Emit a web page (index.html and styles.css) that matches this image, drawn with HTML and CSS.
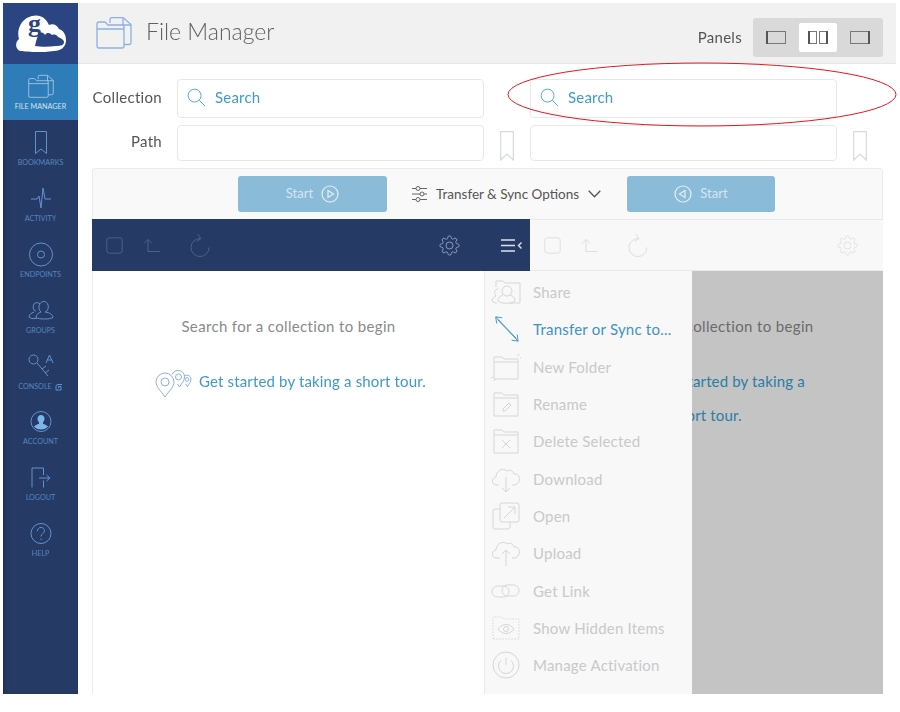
FILE: index.html
```html
<!DOCTYPE html>
<html lang="en">
<head>
<meta charset="utf-8">
<title>File Manager</title>
<link rel="stylesheet" href="styles.css">
</head>
<body>
<svg class="sprite" aria-hidden="true">
  <symbol id="i-search" viewBox="0 0 20 20"><circle cx="8" cy="8" r="6.8"/><path d="M13 13l6 6"/></symbol>
  <symbol id="i-mark" viewBox="0 0 14 30"><path d="M.7.7h12.600v28.300L7 23 .7 29z"/></symbol>
  <symbol id="i-check" viewBox="0 0 17 17"><rect x=".8" y=".8" width="15.400" height="15.400" rx="2.500"/></symbol>
  <symbol id="i-up" viewBox="0 0 17 15"><path d="M5 14V1.500M1 5.500l4-4 4 4M5 13.500h12"/></symbol>
  <symbol id="i-redo" viewBox="0 0 21 24"><path d="M11 5.500a9 9 0 1 0 9 9"/><path d="M8.500 1l3.500 4.500-4.500 3"/></symbol>
  <symbol id="i-gear" viewBox="0 0 24 24"><circle cx="12" cy="12" r="4"/><path d="M19.400 15a1.650 1.650 0 0 0 .33 1.820l.06.06a2 2 0 0 1 0 2.830 2 2 0 0 1-2.830 0l-.06-.06a1.650 1.650 0 0 0-1.820-.33 1.650 1.650 0 0 0-1 1.510V21a2 2 0 0 1-2 2 2 2 0 0 1-2-2v-.09A1.650 1.650 0 0 0 9 19.400a1.650 1.650 0 0 0-1.820.33l-.06.06a2 2 0 0 1-2.830 0 2 2 0 0 1 0-2.830l.06-.06a1.650 1.650 0 0 0 .33-1.820 1.650 1.650 0 0 0-1.510-1H3a2 2 0 0 1-2-2 2 2 0 0 1 2-2h.09A1.650 1.650 0 0 0 4.600 9a1.650 1.650 0 0 0-.33-1.820l-.06-.06a2 2 0 0 1 0-2.830 2 2 0 0 1 2.830 0l.06.06a1.650 1.650 0 0 0 1.820.33H9a1.650 1.650 0 0 0 1-1.510V3a2 2 0 0 1 2-2 2 2 0 0 1 2 2v.09a1.650 1.650 0 0 0 1 1.510 1.650 1.650 0 0 0 1.820-.33l.06-.06a2 2 0 0 1 2.830 0 2 2 0 0 1 0 2.830l-.06.06a1.650 1.650 0 0 0-.33 1.820V9a1.650 1.650 0 0 0 1.510 1H21a2 2 0 0 1 2 2 2 2 0 0 1-2 2h-.09a1.650 1.650 0 0 0-1.510 1z"/></symbol>
  <symbol id="i-folders" viewBox="0 0 36 32"><path d="M14 6V2.500a2 2 0 0 1 2-2h11l8 7v18a2 2 0 0 1-2 2h-5"/><path d="M27 1v7h8"/><path d="M1 28.500V7a2 2 0 0 1 2-2h6l3 3h14a2 2 0 0 1 2 2v19a2 2 0 0 1-2 2H3a2 2 0 0 1-2-2.500zM1 12h27"/></symbol>
  <symbol id="i-pins" viewBox="0 0 37 29"><path d="M10 28C6 22 1 18 1 13a9 9 0 0 1 18 0c0 5-5 9-9 15z"/><circle cx="10" cy="13" r="4"/><path d="M17 5.500a6.500 6.500 0 0 1 12.500 2.500c0 4-3 6-5 10l-2-3"/><circle cx="23.500" cy="8" r="3"/><path d="M29.500 7a4 4 0 0 1 6.500 3c0 3-2 4.500-3.500 7.500L30.500 15"/><circle cx="32" cy="10.500" r="1.800"/></symbol>
</svg>

<div class="app">
  <nav class="side">
    <div class="logo">
      <svg class="logo-cloud" viewBox="0 0 50 37" aria-hidden="true">
        <path class="cloud-white" d="M4 36C-1 34-1 27 3 24 0 14 6 3 16 1c8-2 14 2 17 9 4-2 8 0 10 4 5 2 7 6 7 11 0 7-5 11-12 11-6 1-12 1-18 1-8 0-15-1-16-1z"/>
        <path class="cloud-dark" d="M19 31c1-4 2-10 5-13 2-1 4 0 5 2 2-3 5-2 7 0 3-1 5 0 6 2 3 1 6 3 6 5 0 3-3 4-8 4-7 1-15 1-21 0z"/>
      </svg>
      <span class="logo-g">g</span>
    </div>
    <a class="nav-item active">
      <svg class="nav-icon"><use href="#i-folders"/></svg>
      <span>File Manager</span>
    </a>
    <a class="nav-item">
      <svg class="nav-icon" viewBox="-7 -2 26 27"><path d="M.5.500h11v22L6 18 .5 22.500z"/></svg>
      <span>Bookmarks</span>
    </a>
    <a class="nav-item">
      <svg class="nav-icon" viewBox="-3 -3 26 27"><path d="M0 11h6l2-3 2 12 2-20 2 11h6"/></svg>
      <span>Activity</span>
    </a>
    <a class="nav-item">
      <svg class="nav-icon" viewBox="0 0 26 27"><circle cx="13" cy="13.500" r="11.500"/><circle cx="13" cy="13.500" r="3.500"/></svg>
      <span>Endpoints</span>
    </a>
    <a class="nav-item">
      <svg class="nav-icon" viewBox="0 -3 26 27"><path d="M8 11C5 11 4 5 7 3c2-1 4 0 5 1M6 12c-3 1-5 3-5 5 2 2 6 2 8 1"/><path d="M17 12c4-1 5-9-.5-10.500C11 1 9 9 13 12c-3 1-5 3-5 5.500 3 2 14 2 17 0 0-2.500-3-5-8-5.500z"/></svg>
      <span>Groups</span>
    </a>
    <a class="nav-item">
      <svg class="nav-icon" viewBox="0 0 26 27"><circle cx="5.500" cy="6.500" r="4.500"/><path d="M9 10l11 13M14 16l4-3M17 20l4-3"/><path d="M18 10l3.500-8 3.500 8M19.500 7h4"/></svg>
      <span>Console <svg class="ext" viewBox="0 0 8 8"><path d="M7 1.500H3a2 2 0 0 0-2 2V7h5V3.500H3.500V5"/></svg></span>
    </a>
    <a class="nav-item">
      <svg class="nav-icon" viewBox="-2 -2.500 26 27"><circle cx="11" cy="11" r="10"/><path class="fill" d="M11 4.500c2 0 3.500 1.600 3.500 3.800 0 1.500-.7 2.700-1.500 3.400v1.500c1.800.8 4 1.600 5 3a10 10 0 0 1-14 0c1-1.400 3.200-2.200 5-3v-1.500c-.8-.7-1.500-1.900-1.500-3.400 0-2.200 1.500-3.800 3.500-3.800z"/></svg>
      <span>Account</span>
    </a>
    <a class="nav-item">
      <svg class="nav-icon" viewBox="-3 -3.500 26 27"><path d="M1 20V.500h11.500v7M12.500 13v7M8 10.500h11M15.500 7.500l3.500 3-3.500 3"/></svg>
      <span>Logout</span>
    </a>
    <a class="nav-item">
      <svg class="nav-icon" viewBox="-2 -2.500 26 27"><circle cx="11" cy="11" r="10"/><path d="M7.500 8.500C7.500 6 9 5 11 5s3.500 1.300 3.500 3.200c0 2.800-3.500 2.800-3.500 5.800"/><path d="M11 16v1.500"/></svg>
      <span>Help</span>
    </a>
  </nav>

  <main class="main">
    <header class="top">
      <svg class="top-icon"><use href="#i-folders"/></svg>
      <h1 class="title">File Manager</h1>
      <span class="panels-label">Panels</span>
      <div class="seg">
        <div class="seg-btn"><svg class="seg-icon" viewBox="0 0 20 13"><rect x=".5" y=".5" width="19" height="12"/><path class="seg-bar" d="M1 0v13"/></svg></div>
        <div class="seg-btn on"><svg class="seg-icon" viewBox="0 0 20 13"><rect x=".5" y=".5" width="8" height="12"/><rect x="11.500" y=".5" width="8" height="12"/><path class="seg-bar" d="M1 0v13M19 0v13"/></svg></div>
        <div class="seg-btn"><svg class="seg-icon" viewBox="0 0 20 13"><rect x=".5" y=".5" width="19" height="12"/><path class="seg-bar" d="M19 0v13"/></svg></div>
      </div>
    </header>

    <section class="form">
      <label class="field-label">Collection</label>
      <div class="input tall"><svg class="search-icon"><use href="#i-search"/></svg><span>Search</span></div>
      <span></span>
      <div class="input tall"><svg class="search-icon"><use href="#i-search"/></svg><span>Search</span></div>
      <span></span>
      <label class="field-label">Path</label>
      <div class="input"></div>
      <svg class="mark"><use href="#i-mark"/></svg>
      <div class="input"></div>
      <svg class="mark"><use href="#i-mark"/></svg>
    </section>

    <section class="browser">
      <div class="actions">
        <button class="start"><span>Start</span><svg class="play" viewBox="0 0 18 18"><circle cx="9" cy="9" r="8"/><path d="M7 5.500l5.500 3.500L7 12.500z"/></svg></button>
        <div class="options">
          <svg class="sliders" viewBox="0 0 15 16"><path d="M0 2.500h4M8 2.500h7M0 8h8M12 8h3M0 13.500h4M8 13.500h7"/><circle cx="6" cy="2.500" r="2"/><circle cx="10" cy="8" r="2"/><circle cx="6" cy="13.500" r="2"/></svg>
          <span>Transfer &amp; Sync Options</span>
          <svg class="chev" viewBox="0 0 13 8"><path d="M.7.7l5.800 6 5.800-6"/></svg>
        </div>
        <button class="start back"><svg class="play" viewBox="0 0 18 18"><circle cx="9" cy="9" r="8"/><path d="M11 5.500L5.500 9l5.500 3.500z"/></svg><span>Start</span></button>
      </div>

      <div class="panes">
        <div class="pane">
          <div class="bar dark">
            <svg class="b-check"><use href="#i-check"/></svg>
            <svg class="b-up"><use href="#i-up"/></svg>
            <svg class="b-redo"><use href="#i-redo"/></svg>
            <svg class="b-gear"><use href="#i-gear"/></svg>
            <svg class="b-menu" viewBox="0 0 21 13"><path d="M0 1h14M0 6.500h14M0 12h14M20.500 3.500l-3 3 3 3"/></svg>
          </div>
          <div class="empty open">
            <p class="hint">Search for a collection to begin</p>
            <a class="tour"><svg class="pins"><use href="#i-pins"/></svg>Get started by taking a short tour.</a>
          </div>
        </div>
        <div class="pane">
          <div class="bar light">
            <svg class="b-check"><use href="#i-check"/></svg>
            <svg class="b-up"><use href="#i-up"/></svg>
            <svg class="b-redo"><use href="#i-redo"/></svg>
            <svg class="b-gear"><use href="#i-gear"/></svg>
          </div>
          <div class="empty dim">
            <p class="hint">Search for a collection to begin</p>
            <a class="tour"><svg class="pins"><use href="#i-pins"/></svg>Get started by taking a short tour.</a>
          </div>
        </div>

        <ul class="menu">
          <li><svg viewBox="0 0 30 28"><path d="M5 9V3h7l2 2h15v20H19"/><circle cx="16" cy="13" r="5"/><path d="M12 17c-3 1-5 3-5 6 3 3 14 3 17 0 0-3-2-5-5-6"/><path d="M7 11c-3 0-4 3-3 5 0 1 1 2 1 2-2 1-4 2-4 5 1 1 3 2 5 2"/></svg>Share</li>
          <li class="live"><svg viewBox="-2 0 30 30"><path d="M2 2l7 1M2 2l1 7M2 2l22 23M26 28l-7-1M26 28l-1-7M26 28L4 5"/></svg>Transfer or Sync to...</li>
          <li><svg viewBox="0 0 30 28"><path d="M3 22V4h8l2 2h14v20H3z"/><path d="M3 9h24M27 3l1-2M29 5l2-1M0 25l2-1M3 28l1-2"/></svg>New Folder</li>
          <li><svg viewBox="0 0 30 26"><path d="M3 25V2h8l2 2h14v21H3zM3 7h24M12 18l6-6 2 2-6 6h-2z"/></svg>Rename</li>
          <li><svg viewBox="0 0 30 26"><path d="M3 25V2h8l2 2h14v21H3zM3 7h24M11 12l8 8M19 12l-8 8"/></svg>Delete Selected</li>
          <li><svg viewBox="0 0 30 28"><path d="M8 20H6c-6 0-6-7-1-8 0-6 7-10 11-6 3-2 6 0 7 3 6-1 8 8 1 11h-3M15 12v15M11 23l4 4 4-4"/></svg>Download</li>
          <li><svg viewBox="0 0 30 28"><path d="M9 7H4a2 2 0 0 0-2 2v16a2 2 0 0 0 2 2h13a2 2 0 0 0 2-2v-5"/><rect x="9" y="1" width="19" height="19" rx="2"/><path d="M13 16L24 5M17 5h7v7"/></svg>Open</li>
          <li><svg viewBox="0 0 30 28"><path d="M9 19H6c-6 0-6-7-1-8 0-6 7-10 11-6 3-2 6 0 7 3 6-1 8 8 1 11h-3M15 11v16M11 15l4-4 4 4"/></svg>Upload</li>
          <li><svg viewBox="0 0 30 28"><rect x="1" y="9" width="17" height="11" rx="5.500"/><rect x="11" y="8" width="17" height="11" rx="5.500"/></svg>Get Link</li>
          <li><svg viewBox="0 0 30 26"><path class="dots" d="M2 24V2h9l2 2h15v20z"/><path d="M7 14c4-6 12-6 16 0-4 6-12 6-16 0z"/><circle cx="15" cy="14" r="2.500"/></svg>Show Hidden Items</li>
          <li><svg viewBox="0 0 28 28"><circle cx="14" cy="14" r="13"/><path d="M14 7v7M9 9.500a7.500 7.500 0 1 0 10 0"/></svg>Manage Activation</li>
        </ul>
      </div>
    </section>
  </main>
</div>

<svg class="note" viewBox="0 0 390 65" aria-hidden="true"><ellipse cx="195" cy="32.500" rx="194" ry="31.500"/></svg>
</body>
</html>
```
FILE: styles.css
```css
* { box-sizing: border-box; }
html, body { margin: 0; background: #fff; }
body {
  position: relative;
  padding: 3px 4px 0 3px;
  height: 712px;
  overflow: hidden;
  font-family: Lato, "Open Sans", sans-serif;
  color: #555;
}
ul, p, h1 { margin: 0; padding: 0; }
svg { display: block; fill: none; stroke-width: 1; }
.sprite { position: absolute; width: 0; height: 0; }

.app { display: flex; height: 691px; filter: blur(.35px); }

/* sidebar */
.side { width: 75px; flex: none; background: #263a66; box-shadow: inset 5px 0 5px -4px #1d2c50; }
.logo { position: relative; height: 61px; background: #2b4482; display: flex; align-items: center; justify-content: center; }
.logo-cloud { width: 50px; height: 37px; }
.cloud-white { fill: #fff; }
.cloud-dark { fill: #2b4482; }
.logo-g {
  position: absolute; left: 25px; top: 3px;
  font: bold 26px/36px "Liberation Serif", serif;
  color: #2b4482;
}
.nav-item {
  height: 55.900px;
  display: flex; flex-direction: column; align-items: center;
  font-size: 7.200px; line-height: 10px; text-transform: uppercase;
  color: #5685bb;
  padding-top: 9px;
}
.nav-item span { display: flex; align-items: center; gap: 3px; margin-top: 1px; }
.nav-icon { width: 26px; height: 27px; stroke: #5f93cf; margin-bottom: 1px; }
.nav-item.active { background: #2f7db8; color: #cfe2f2; height: 56px; }
.nav-item.active .nav-icon { stroke: #bcd8ee; }
.nav-item .fill { fill: #7db5ea; stroke: none; }
.ext { width: 8px; height: 8px; stroke: #5f93cf; }

/* top bar */
.main { flex: 1; min-width: 0; display: flex; flex-direction: column; }
.top {
  height: 61px; flex: none;
  display: flex; align-items: center;
  background: #f1f1f1;
  border-bottom: 1px solid #e6e6e6;
  padding: 0 13px 0 18px;
}
.top-icon { width: 36px; height: 32px; stroke: #8fb0df; stroke-width: 1.300; }
.title { font-size: 23px; font-weight: 300; color: #5f5f5f; margin: 0 0 4px 14px; flex: 1; }
.panels-label { font-size: 15px; letter-spacing: .3px; color: #555; margin: 8px 11px 0 0; }
.seg { display: flex; width: 130px; height: 39px; margin-top: 8px; padding: 5px 3px; background: #d9d9d9; border-radius: 3px; justify-content: space-between; }
.seg-btn { width: 38px; display: flex; align-items: center; justify-content: center; border-radius: 2px; margin: 0 1px; }
.seg-btn.on { background: #fff; }
.seg-icon { width: 20px; height: 13px; stroke: #777; }
.seg-bar { stroke: #555; stroke-width: 2; }

/* form */
.form {
  display: grid;
  grid-template-columns: 85px 307px 46px 307px 46px;
  grid-template-rows: 39px 36px;
  row-gap: 7px;
  padding: 15px 13px 0 14px;
  align-items: center;
}
.field-label { font-size: 15px; letter-spacing: .3px; color: #555; text-align: right; padding: 0 15px 4px 0; }
.input {
  height: 36px;
  border: 1.500px solid #e3e7ee; border-radius: 4px; background: #fff;
  display: flex; align-items: center;
  font-size: 15px; letter-spacing: .2px; color: #3f9bcb;
}
.input.tall { height: 39px; padding: 0 0 3px 9px; }
.search-icon { width: 19px; height: 19px; stroke: #4fa3d1; margin-right: 9px; }
.mark { width: 14px; height: 30px; stroke: #d4dadf; margin: 6px 0 0 16px; stroke-width: 1.200; }

/* browser */
.browser { margin: 7px 13px 0 14px; flex: 1; display: flex; flex-direction: column; min-height: 0; }
.actions {
  height: 51px; flex: none;
  display: flex; align-items: center; gap: 25px;
  padding-left: 145px;
  background: #f9f9f9;
  border: 1px solid #ebebeb; border-bottom: 0; border-radius: 4px 4px 0 0;
}
.start {
  width: 149px; height: 36px;
  display: flex; align-items: center; justify-content: center; gap: 8px;
  background: #8abbd9; border: 0; border-radius: 3px;
  color: #d5e6f0; font: 13px Lato, sans-serif;
}
.start.back { width: 148px; }
.start span { padding-bottom: 2px; }
.play { width: 18px; height: 18px; stroke: #e4f0f6; stroke-width: 1.200; }
.options { display: flex; align-items: center; width: 190px; font-size: 13.500px; color: #555; }
.sliders { width: 15px; height: 16px; stroke: #666; margin-right: 9px; }
.chev { width: 13px; height: 8px; stroke: #555; stroke-width: 1.300; margin: 0 1px 0 auto; }

.panes { position: relative; flex: 1; display: grid; grid-template-columns: 438px 353px; min-height: 0; }
.pane { display: flex; flex-direction: column; min-height: 0; }
.bar { height: 52px; flex: none; display: flex; align-items: center; padding: 0 8px 0 14px; }
.bar.dark { background: #263a66; stroke: #4d6088; }
.bar.light { background: #f8f8f8; border-top: 1px solid #e9e9e9; border-bottom: 1px solid #e9e9e9; padding-right: 25px; stroke: #dfdfdf; }
.bar svg { stroke: inherit; }
.b-check { width: 17px; height: 17px; }
.b-up { width: 17px; height: 15px; margin-left: 20px; }
.b-redo { width: 21px; height: 24px; margin-left: 29px; }
.b-gear { width: 21px; height: 21px; margin-left: auto; }
.bar.dark .b-gear { stroke: #9aa8c4; }
.b-menu { width: 21px; height: 13px; margin-left: 41px; }
.bar.dark .b-menu { stroke: #dbe2ea; stroke-width: 1.400; }

.empty { flex: 1; background: #fff; border-left: 1px solid #eaeaea; padding-top: 43px; text-align: center; }
.empty.open { padding-right: 46px; }
.empty.dim { background: #c4c4c4; border-left: 0; }
.hint { font-size: 15px; letter-spacing: .35px; line-height: 24px; color: #8a8a8a; white-space: nowrap; }
.tour { display: block; margin-top: 26px; padding: 0 48px 0 52px; font-size: 15px; letter-spacing: .15px; line-height: 34px; color: #3d9ac9; }
.dim .tour { padding: 0 70px; color: #2b7da6; }
.dim .hint { color: #6b6b6b; }
.pins { display: inline-block; vertical-align: middle; width: 37px; height: 29px; margin-right: 7px; stroke: #8fb0df; }

.menu {
  position: absolute; left: 392px; top: 52px; bottom: 0; width: 208px;
  list-style: none; padding-top: 2.500px;
  background: #f8f8f8; border-left: 1px solid #e8e8e8;
}
.menu li { height: 37.300px; display: flex; align-items: center; font-size: 15px; letter-spacing: .22px; color: #c9c9c9; padding-left: 6px; }
.menu svg { width: 30px; height: 28px; flex: none; margin-right: 12px; stroke: #d6d6d6; }
.menu .live { color: #3d93c4; }
.menu .live svg { stroke: #3d93c4; }
.dots { stroke-dasharray: 1.500 1.500; }

.note { position: absolute; left: 507px; top: 62px; width: 390px; height: 65px; pointer-events: none; }
.note ellipse { stroke: #e8141c; stroke-width: 1; }
```
